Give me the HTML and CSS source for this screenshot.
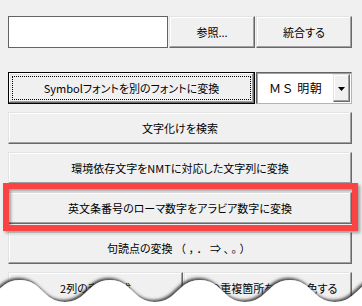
FILE: index.html
```html
<!DOCTYPE html>
<html lang="ja">
<head>
    <meta charset="UTF-8">
    <title>変換ツール</title>
    <link rel="stylesheet" href="styles.css">
</head>
<body>

    <div class="panel">
        <!-- ファイル選択 -->
        <div class="row row-file">
            <div class="textbox"></div>
            <button class="btn browse">参照...</button>
            <button class="btn merge">統合する</button>
        </div>

        <!-- フォント変換 -->
        <div class="row row-font">
            <button class="btn default symbol">Symbolフォントを別のフォントに変換</button>
            <div class="combo">
                <span class="combo-text">ＭＳ 明朝</span>
                <span class="combo-arrow">
                    <svg width="7" height="4" viewBox="0 0 7 4"><path d="M0 0h7L3.5 4z" fill="#000"/></svg>
                </span>
            </div>
        </div>

        <div class="list">
            <button class="btn wide">文字化けを検索</button>
            <button class="btn wide">環境依存文字をNMTに対応した文字列に変換</button>
            <div class="marked">
                <button class="btn wide">英文条番号のローマ数字をアラビア数字に変換</button>
                <div class="highlight"></div>
            </div>
            <button class="btn wide">句読点の変換 <span class="punct">（，．⇒、。）</span></button>
            <div class="row row-split">
                <button class="btn table">2列の表を作成</button>
                <button class="btn dup">表の重複箇所を赤で着色する</button>
            </div>
        </div>
    </div>

    <!-- 破れた紙の下端 -->
    <svg class="tear" width="362" height="306" viewBox="0 0 362 306">
        <defs>
            <filter id="tear-shadow" x="-10%" y="-50%" width="120%" height="200%">
                <feDropShadow dx="-1.5" dy="-2" stdDeviation="1.8" flood-color="#333" flood-opacity="0.9"/>
            </filter>
        </defs>
        <path filter="url(#tear-shadow)" fill="#fff"
              d="M-25 302 C-3 302 -2 280 20 280 S43 302 65 302 S88 280 110 280 S133 302 155 302 S178 280 200 280 S223 302 245 302 S268 280 290 280 S313 302 335 302 S358 280 380 280 L380 320 L-25 320 Z"/>
    </svg>

</body>
</html>
```

FILE: styles.css
```css
body {
    margin: 0;
    width: 362px;
    height: 306px;
    overflow: hidden;
    background-color: #f0f0f0;
    font-family: "Noto Sans CJK JP", "Liberation Sans", sans-serif;
    font-size: 11px;
    color: #000;
    position: relative;
}

.panel {
    padding: 16px 0 0 8px;
    width: 344px;
}

.row {
    display: flex;
    gap: 1px;
    height: 32px;
}

.row-font {
    margin-top: 24px;
}

.list {
    display: flex;
    flex-direction: column;
    gap: 8px;
    margin-top: 8px;
}

/* Windows風ボタン */
.btn {
    font-family: inherit;
    font-size: 11px;
    font-feature-settings: "palt";
    color: #000;
    background-color: #f0f0f0;
    border: 1px solid;
    border-color: #e3e3e3 #696969 #696969 #e3e3e3;
    box-shadow: inset -1px -1px #a0a0a0, inset 1px 1px #fff;
    padding: 0;
    height: 32px;
    line-height: 30px;
    text-align: center;
    white-space: nowrap;
    overflow: hidden;
}

.btn.default {
    border-color: #000;
    box-shadow: inset -1px -1px #696969, inset 1px 1px #fff, inset -2px -2px #a0a0a0, inset 2px 2px #e3e3e3;
    outline: 1px dotted #000;
    outline-offset: -5px;
}

.punct {
    font-feature-settings: normal;
    letter-spacing: 2.5px;
}

.textbox {
    width: 160px;
    height: 32px;
    box-sizing: border-box;
    background-color: #fff;
    border: 1px solid #646464;
}

.browse {
    width: 86px;
}

.merge {
    width: 96px;
}

.symbol {
    width: 247px;
}

.wide {
    width: 344px;
}

.table {
    width: 175px;
}

.dup {
    width: 168px;
}

/* フォント選択 */
.combo {
    width: 96px;
    height: 32px;
    box-sizing: border-box;
    display: flex;
    align-items: stretch;
    background-color: #fff;
    border: 1px solid;
    border-color: #646464 #b4b4b4 #b4b4b4 #646464;
    box-shadow: inset 1px 1px #a0a0a0;
    padding: 1px;
}

.combo-text {
    flex: 1;
    font-size: 12px;
    line-height: 28px;
    padding-left: 11px;
    letter-spacing: 0.5px;
}

.combo-arrow {
    width: 17px;
    display: flex;
    align-items: center;
    justify-content: center;
    background-color: #f0f0f0;
    box-sizing: border-box;
    border: 1px solid;
    border-color: #e3e3e3 #696969 #696969 #e3e3e3;
    box-shadow: inset -1px -1px #a0a0a0, inset 1px 1px #fff;
    padding-top: 2px;
}

/* 赤枠の強調表示 */
.marked {
    position: relative;
    height: 32px;
}

.highlight {
    position: absolute;
    top: -9px;
    left: -5px;
    right: -6px;
    bottom: -7px;
    border: 6px solid #fc4343;
    box-shadow: 2px 2px 3px rgba(0, 0, 0, 0.35), inset 2px 2px 3px rgba(0, 0, 0, 0.35);
}

.tear {
    position: absolute;
    left: 0;
    top: 0;
    pointer-events: none;
}
```
